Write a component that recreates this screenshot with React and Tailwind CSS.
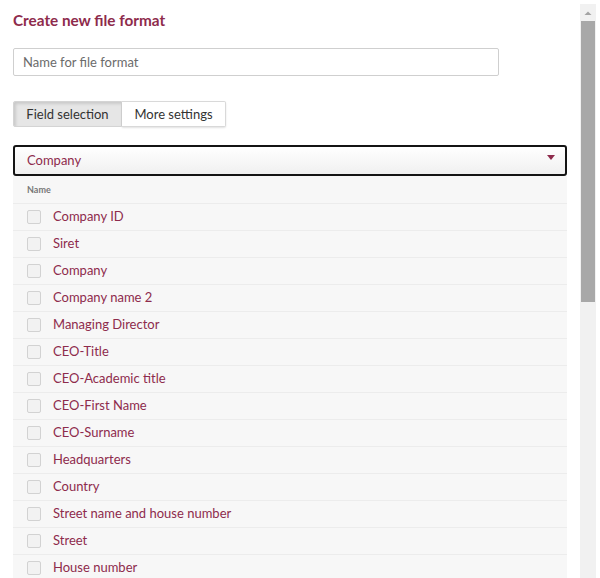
const FIELDS = [
  'Company ID',
  'Siret',
  'Company',
  'Company name 2',
  'Managing Director',
  'CEO-Title',
  'CEO-Academic title',
  'CEO-First Name',
  'CEO-Surname',
  'Headquarters',
  'Country',
  'Street name and house number',
  'Street',
  'House number',
]

function FieldRow({ label }) {
  return (
    <div className="flex h-[27px] items-center border-t border-[#ececec] pl-[14px]">
      <span className="h-[14px] w-[14px] rounded-[2px] border border-[#d2d2d2] bg-[#f2f2f2]" />
      <span className="ml-[12px] text-[13px] text-[#8e2b4c]">{label}</span>
    </div>
  )
}

function Scrollbar() {
  return (
    <div className="mt-[4px] flex h-[574px] w-[16px] flex-col items-center bg-[#f1f1f1]">
      <svg width="16" height="17" viewBox="0 0 16 17" className="shrink-0">
        <path d="M4.5 11 L8 7.5 L11.5 11 Z" fill="#a3a3a3" />
      </svg>
      <div className="h-[281px] w-[14px] bg-[#a8a8a8]" />
    </div>
  )
}

export default function App() {
  return (
    <div className="flex h-[578px] w-[600px] overflow-hidden bg-white font-['Lato','Open_Sans',sans-serif]">
      <div className="w-[567px] pl-[13px]">
        <h1 className="pt-[10px] text-[15.3px] font-bold leading-[20px] text-[#8e2b4c]">
          Create new file format
        </h1>

        <input
          className="mt-[18px] block h-[28px] w-[486px] rounded-[2px] border border-[#cfcfcf] px-[9px] text-[13px] text-[#555] outline-none placeholder:text-[#6b6b6b]"
          placeholder="Name for file format"
        />

        <div className="mt-[25px] flex h-[26px]">
          <button className="w-[109px] rounded-l-[2px] border border-[#d4d4d4] bg-[#e6e6e6] pt-[2px] text-[13px] text-[#333] shadow-[inset_2px_2px_3px_rgba(0,0,0,0.12)]">
            Field selection
          </button>
          <button className="w-[104px] rounded-r-[2px] border border-l-0 border-[#d9d9d9] bg-white pt-[2px] text-[13px] text-[#333] shadow-[0_1px_2px_rgba(0,0,0,0.12)]">
            More settings
          </button>
        </div>

        <div className="mt-[18px] flex h-[31px] items-center justify-between rounded-[3px] border-2 border-[#141414] bg-gradient-to-b from-white to-[#f0f0f0] pl-[12px] pr-[10px]">
          <span className="text-[13px] text-[#8e2b4c]">Company</span>
          <svg width="8" height="5" viewBox="0 0 8 5" className="mb-[6px]">
            <path d="M0 0 H8 L4 5 Z" fill="#8e2b4c" />
          </svg>
        </div>

        <div className="bg-[#f7f7f7]">
          <div className="flex h-[27px] items-center pl-[14px] text-[9px] font-bold text-[#777]">Name</div>
          {FIELDS.map((f) => (
            <FieldRow key={f} label={f} />
          ))}
        </div>
      </div>
      <div className="ml-[13px]">
        <Scrollbar />
      </div>
    </div>
  )
}
